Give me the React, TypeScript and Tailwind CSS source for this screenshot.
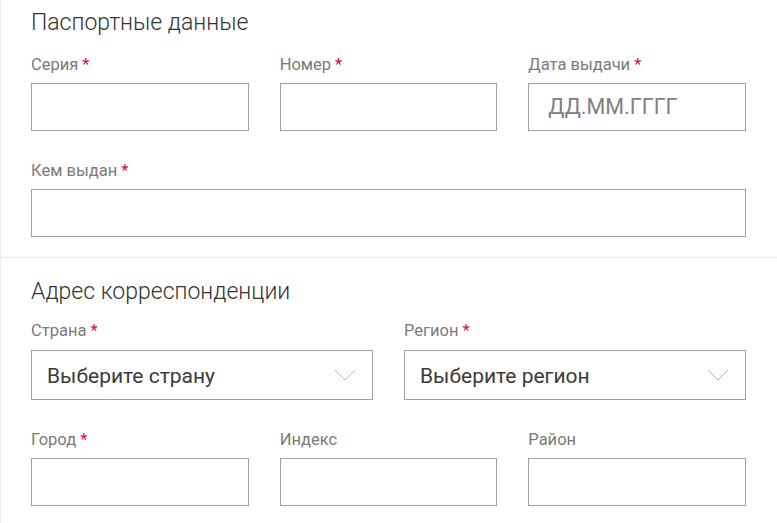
import React from 'react';

const font = { fontFamily: 'Roboto, "Noto Sans", sans-serif' };

function Label({ text, required }: { text: string; required?: boolean }) {
  return (
    <div className="h-5 text-[16.5px] leading-5 text-[#7a7a7a]">
      {text}
      {required && <span className="ml-1 text-[#d0103a]">*</span>}
    </div>
  );
}

function Field({ label, required, placeholder }: { label: string; required?: boolean; placeholder?: string }) {
  return (
    <div className="flex flex-col">
      <Label text={label} required={required} />
      <div className="mt-2 flex h-12 items-center border border-[#a0a0a0] bg-white px-[19px] text-[21.5px] text-[#808080]">
        {placeholder}
      </div>
    </div>
  );
}

function Select({ label, value }: { label: string; value: string }) {
  return (
    <div className="flex flex-col">
      <Label text={label} required />
      <div className="mt-[9px] flex h-[50px] items-center justify-between border border-[#a0a0a0] bg-white pl-[15px] pr-4 pt-[3px] text-[21px] text-[#3a3a3a]">
        <span>{value}</span>
        <svg width="22" height="12" viewBox="0 0 22 12" fill="none" className="-mt-[3px]">
          <path d="M1 1l10 10L21 1" stroke="#b5b5b5" strokeWidth="1" />
        </svg>
      </div>
    </div>
  );
}

export default function App() {
  return (
    <div className="h-[523px] w-[777px] overflow-hidden border-l border-[#ececec] bg-white" style={font}>
      <section className="pl-[30px] pr-[31px] pt-[9px] pb-5">
        <h2 className="text-[23px] leading-7 font-light text-[#333]">Паспортные данные</h2>
        <div className="mt-[18px] grid grid-cols-3 gap-x-[31px]">
          <Field label="Серия" required />
          <Field label="Номер" required />
          <Field label="Дата выдачи" required placeholder="ДД.ММ.ГГГГ" />
        </div>
        <div className="mt-[30px]">
          <Field label="Кем выдан" required />
        </div>
      </section>
      <div className="h-px bg-[#e8e8e8]" />
      <section className="pl-[30px] pr-[31px] pt-5">
        <h2 className="text-[23px] leading-7 font-light text-[#333]">Адрес корреспонденции</h2>
        <div className="mt-[15px] grid grid-cols-2 gap-x-[31px]">
          <Select label="Страна" value="Выберите страну" />
          <Select label="Регион" value="Выберите регион" />
        </div>
        <div className="mt-[30px] grid grid-cols-3 gap-x-[31px]">
          <Field label="Город" required />
          <Field label="Индекс" />
          <Field label="Район" />
        </div>
      </section>
    </div>
  );
}
